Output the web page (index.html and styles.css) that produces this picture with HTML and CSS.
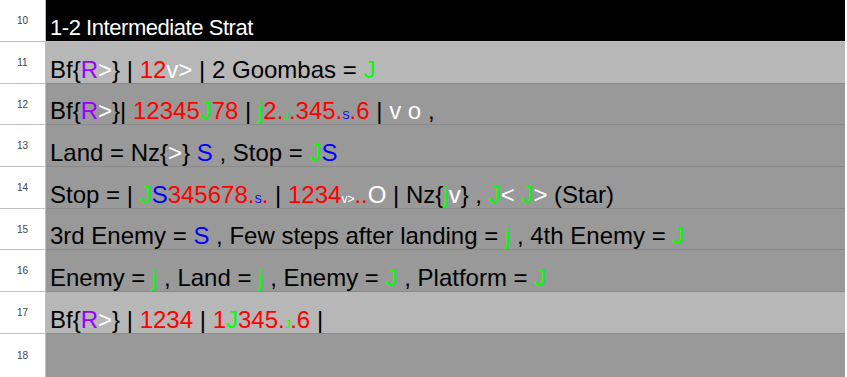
FILE: index.html
```html
<!DOCTYPE html>
<html>
<head>
<meta charset="utf-8">
<link rel="stylesheet" href="styles.css">
</head>
<body>
<div class="sheet">
  <div class="row h41"><div class="num">10</div><div class="cell title"><div class="txt">1-2 Intermediate Strat</div></div></div>
  <div class="row h41"><div class="num">11</div><div class="cell light"><div class="txt">Bf{<span class="p">R</span><span class="w">&gt;</span>} | <span class="r">12</span><span class="w">v&gt;</span> | 2 Goombas = <span class="g">J</span></div></div></div>
  <div class="row h40"><div class="num">12</div><div class="cell"><div class="txt">Bf{<span class="p">R</span><span class="w">&gt;</span>}| <span class="r">12345</span><span class="g">J</span><span class="r">78</span> | <span class="g">j</span><span class="r">2.</span><span class="g sm">J</span><span class="r">.345.</span><span class="b sm">S</span><span class="r">.6</span> | <span class="w">v o</span> ,</div></div></div>
  <div class="row h41"><div class="num">13</div><div class="cell"><div class="txt">Land = Nz{<span class="w">&gt;</span>} <span class="b">S</span> , Stop = <span class="g">J</span><span class="b">S</span></div></div></div>
  <div class="row h41"><div class="num">14</div><div class="cell"><div class="txt">Stop = | <span class="g">J</span><span class="b">S</span><span class="r">345678.</span><span class="b sm">S</span><span class="r">.</span> | <span class="r">1234</span><span class="w sm2">v&gt;</span><span class="r">..</span><span class="w">O</span> | Nz{<span class="g">j</span><span class="w">v</span>} , <span class="g">J</span><span class="w">&lt;</span> <span class="g">J</span><span class="w">&gt;</span> (Star)</div></div></div>
  <div class="row h40"><div class="num">15</div><div class="cell"><div class="txt">3rd Enemy = <span class="b">S</span> , Few steps after landing = <span class="g">j</span> , 4th Enemy = <span class="g">J</span></div></div></div>
  <div class="row h41"><div class="num">16</div><div class="cell"><div class="txt">Enemy = <span class="g">j</span> , Land = <span class="g">j</span> , Enemy = <span class="g">J</span> , Platform = <span class="g">J</span></div></div></div>
  <div class="row h41"><div class="num">17</div><div class="cell light"><div class="txt">Bf{<span class="p">R</span><span class="w">&gt;</span>} | <span class="r">1234</span> | <span class="r">1</span><span class="g">J</span><span class="r">345.</span><span class="g sm">J</span><span class="r">.6</span> |</div></div></div>
  <div class="row last"><div class="num">18</div><div class="cell"></div></div>
</div>
</body>
</html>
```

FILE: styles.css
```css
html, body {
  margin: 0;
  padding: 0;
  background: #ffffff;
}
.sheet {
  width: 845px;
  height: 377px;
  display: flex;
  flex-direction: column;
  overflow: hidden;
}
.row {
  display: flex;
  flex: none;
}
.h41 { height: 42px; }
.h40 { height: 41px; }
.row.last { flex: 1; }
.num {
  width: 45px;
  flex: none;
  border-right: 1px solid #c0c0c0;
  border-bottom: 1px solid #c0c0c0;
  background: #ffffff;
  display: flex;
  align-items: center;
  justify-content: center;
  font-family: "Liberation Sans", Arial, sans-serif;
  font-size: 10px;
  color: #444444;
}
.row.last .num { border-bottom: none; }
.cell {
  flex: 1;
  background: #999999;
  color: #000000;
  font-family: "Liberation Sans", Arial, sans-serif;
  font-size: 24px;
  white-space: nowrap;
  display: flex;
  align-items: flex-end;
  padding: 0 0 0 4px;
  border-bottom: 1px solid #8a8a8a;
  box-sizing: border-box;
}
.row.last .cell { border-bottom: none; }
.cell.title {
  background: #000000;
  color: #ffffff;
  border-bottom-color: #c0c0c0;
  font-size: 22px;
  letter-spacing: -0.45px;
}
.cell.light { background: #b7b7b7; }
.txt { white-space: pre; line-height: 26px; }
.r { color: #ff0000; }
.g { color: #00ff00; }
.b { color: #0000ff; }
.p { color: #9900ff; }
.w { color: #ffffff; }
.sm { font-size: 11px; line-height: 0; }
.sm2 { font-size: 12px; line-height: 0; }
```
